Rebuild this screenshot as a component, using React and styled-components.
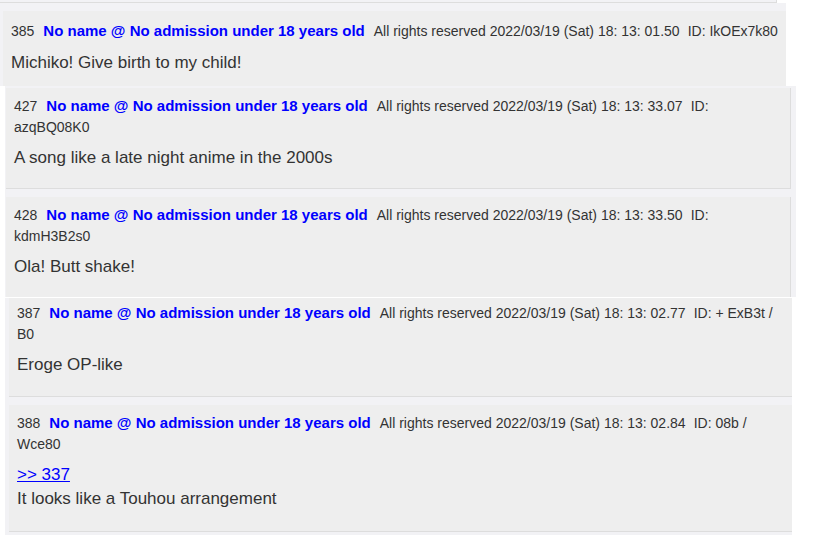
import styled, { createGlobalStyle } from 'styled-components';

const GlobalStyle = createGlobalStyle`
    body {
        margin: 0;
        background: #ffffff;
        font-family: "Liberation Sans", Arial, sans-serif;
        color: #333333;
    }
`;

const Page = styled.div`
    width: 829px;
    display: flex;
    flex-direction: column;
`;

const TopStrip = styled.div`
    width: 776px;
    height: 2px;
    background: #f2f2f5;
    border-bottom: 1px solid #dddddd;
    border-right: 1px solid #dddddd;
`;

const Frame = styled.div`
    box-sizing: border-box;
    margin-left: ${(p) => p.$left}px;
    margin-top: ${(p) => p.$top || 0}px;
    width: ${(p) => p.$width}px;
    padding: ${(p) => p.$pad};
    background: #f2f2f5;
    display: flex;
    flex-direction: column;
    gap: 8px;
`;

const Post = styled.div`
    background: #eeeeee;
    padding: ${(p) => p.$pt || 8}px ${(p) => (p.$pr === undefined ? 8 : p.$pr)}px ${(p) => p.$pb || 18}px 8px;
    border-bottom: ${(p) => (p.$bottom ? '1px solid #dddddd' : 'none')};
    border-right: ${(p) => (p.$right ? '1px solid #dddddd' : 'none')};
`;

const Header = styled.div`
    font-size: 14px;
    line-height: 21px;
    color: #333333;
`;

const Num = styled.span`
    margin-right: 9px;
`;

const Name = styled.span`
    font-size: 15px;
    line-height: 16px;
    font-weight: bold;
    color: #0000ff;
    margin-right: 9px;
`;

const Meta = styled.span`
    margin-right: 8px;
`;

const Body = styled.div`
    margin-top: ${(p) => p.$gap || 8}px;
    font-size: 17px;
    line-height: 24px;
    color: #333333;
`;

const Anchor = styled.a`
    display: block;
    color: #0000ff;
    text-decoration: underline;
`;

const PostItem = ({ num, date, id, reply, text, gap, ...rest }) => (
    <Post {...rest}>
        <Header>
            <Num>{num}</Num>
            <Name>No name @ No admission under 18 years old</Name>
            <Meta>All rights reserved 2022/03/19 (Sat) {date}</Meta>
            <span>ID: {id}</span>
        </Header>
        <Body $gap={gap}>
            {reply && <Anchor href="#">{reply}</Anchor>}
            {text}
        </Body>
    </Post>
);

export default function App() {
    return (
        <>
            <GlobalStyle />
            <Page>
                <TopStrip />
                <Frame $left={0} $width={786} $pad="8px 0 0 3px">
                    <PostItem
                        num="385"
                        date="18: 13: 01.50"
                        id="IkOEx7k80"
                        text="Michiko! Give birth to my child!"
                        gap={9}
                        $pt={10}
                        $pr={0}
                        $pb={11}
                    />
                </Frame>
                <Frame $left={5} $width={791} $pad="2px 5px 0 1px">
                    <PostItem
                        num="427"
                        date="18: 13: 33.07"
                        id="azqBQ08K0"
                        text="A song like a late night anime in the 2000s"
                        $bottom
                        $right
                    />
                    <PostItem num="428" date="18: 13: 33.50" id="kdmH3B2s0" text="Ola! Butt shake!" $right />
                </Frame>
                <Frame $left={5} $top={1} $width={787} $pad="0 0 3px 4px">
                    <PostItem num="387" date="18: 13: 02.77" id="+ ExB3t / B0" text="Eroge OP-like" $pt={5} $pb={19} $bottom />
                    <PostItem
                        num="388"
                        date="18: 13: 02.84"
                        id="08b / Wce80"
                        reply=">> 337"
                        text="It looks like a Touhou arrangement"
                        $pb={20}
                        $bottom
                    />
                </Frame>
            </Page>
        </>
    );
}
